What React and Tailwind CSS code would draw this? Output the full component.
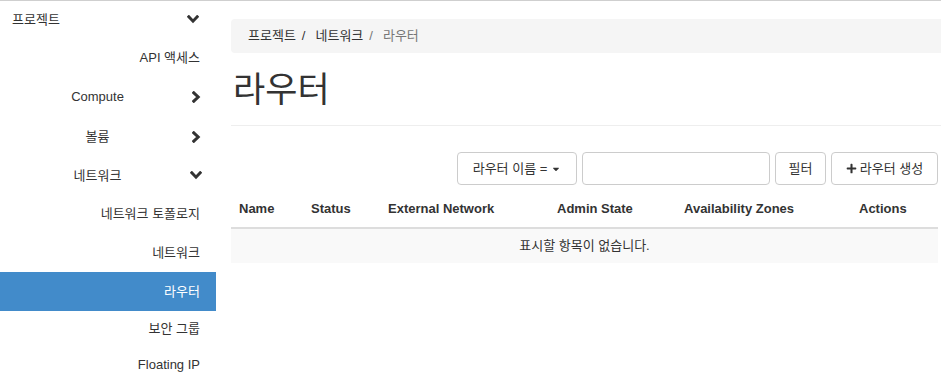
import React from "react";
import { FaPlus, FaCaretDown } from "react-icons/fa";

const font = { fontFamily: '"Liberation Sans", "Noto Sans CJK KR", sans-serif' };

function ChevDown() {
  return (
    <svg width="12" height="9" viewBox="0 0 12 9" className="text-[#333]">
      <polyline points="1.8,1.8 6,6.2 10.2,1.8" fill="none" stroke="currentColor" strokeWidth="3" strokeLinecap="square" />
    </svg>
  );
}
function ChevRight() {
  return (
    <svg width="9" height="12" viewBox="0 0 9 12" className="text-[#333]">
      <polyline points="1.8,1.8 6.2,6 1.8,10.2" fill="none" stroke="currentColor" strokeWidth="3" strokeLinecap="square" />
    </svg>
  );
}

function SideItem({ label, chevron, active, left, center, h }) {
  if (left) {
    return (
      <div className={"flex items-center justify-between pl-[12px] pr-[17px] text-[13px] text-[#333] " + h}>
        <span>{label}</span>
        {chevron}
      </div>
    );
  }
  if (center) {
    return (
      <div className={"flex items-center text-[13px] text-[#333] " + h}>
        <span className="w-[195px] text-center">{label}</span>
        <span className="flex items-center w-[12px] justify-center -ml-[5px]">{chevron}</span>
      </div>
    );
  }
  return (
    <div
      className={
        "flex items-center justify-end pr-[16px] text-[13px] " +
        h +
        " " +
        (active ? "bg-[#428bca] text-white" : "text-[#333]")
      }
    >
      {label}
    </div>
  );
}

export default function App() {
  return (
    <div className="w-[941px] h-[387px] overflow-hidden bg-white border-t border-[#cfcfcf] flex" style={font}>
      <div className="w-[216px] shrink-0">
        <SideItem h="h-[37px]" label="프로젝트" left chevron={<ChevDown />} />
        <SideItem h="h-[39px]" label="API 액세스" />
        <SideItem h="h-[40px]" label="Compute" center chevron={<ChevRight />} />
        <SideItem h="h-[39px]" label="볼륨" center chevron={<ChevRight />} />
        <SideItem h="h-[39px]" label="네트워크" center chevron={<ChevDown />} />
        <SideItem h="h-[38px]" label="네트워크 토폴로지" />
        <SideItem h="h-[39px]" label="네트워크" />
        <SideItem h="h-[39px]" label="라우터" active />
        <SideItem h="h-[35px]" label="보안 그룹" />
        <SideItem h="h-[38px]" label="Floating IP" />
      </div>
      <div className="flex-1 pl-[15px] pt-[18px]">
        <div className="h-[34px] bg-[#f5f5f5] rounded-l-[4px] flex items-center pl-[17px] text-[13px] text-[#333]">
          <span>프로젝트</span>
          <span className="px-[6px] text-[#333]">/</span>
          <span className="ml-[4px]">네트워크</span>
          <span className="px-[6px] text-[#777]">/</span>
          <span className="ml-[4px] text-[#777]">라우터</span>
        </div>
        <div className="h-[73px] border-b border-[#eee] flex items-center pl-[2px]">
          <h1 className="text-[35px] text-[#333] leading-none">라우터</h1>
        </div>
        <div className="flex justify-end gap-[5px] mt-[26px] pr-[3px]">
          <button className="h-[33px] w-[120px] border border-[#ccc] rounded-[4px] bg-white text-[13px] text-[#333] flex items-center justify-center gap-[4px]">
            <span>라우터 이름 =</span>
            <FaCaretDown className="w-[10px] h-[10px]" />
          </button>
          <div className="h-[33px] w-[188px] border border-[#ccc] rounded-[4px] bg-white" />
          <button className="h-[33px] w-[51px] border border-[#ccc] rounded-[4px] bg-white text-[13px] text-[#333]">
            필터
          </button>
          <button className="h-[33px] w-[107px] border border-[#ccc] rounded-[4px] bg-white text-[13px] text-[#333] flex items-center justify-center gap-[3px]">
            <FaPlus className="w-[11px] h-[11px]" />
            <span>라우터 생성</span>
          </button>
        </div>
        <div className="mt-[5px] pr-[3px]">
          <div className="grid grid-cols-[72px_77px_169px_127px_175px_1fr] h-[39px] items-center border-b-2 border-[#ddd] text-[13px] font-bold text-[#333]">
            <div className="pl-[8px]">Name</div>
            <div className="pl-[8px]">Status</div>
            <div className="pl-[8px]">External Network</div>
            <div className="pl-[8px]">Admin State</div>
            <div className="pl-[8px]">Availability Zones</div>
            <div className="pl-[8px]">Actions</div>
          </div>
          <div className="h-[34px] bg-[#f9f9f9] flex items-center justify-center text-[13px] text-[#333]">
            표시할 항목이 없습니다.
          </div>
        </div>
      </div>
    </div>
  );
}
